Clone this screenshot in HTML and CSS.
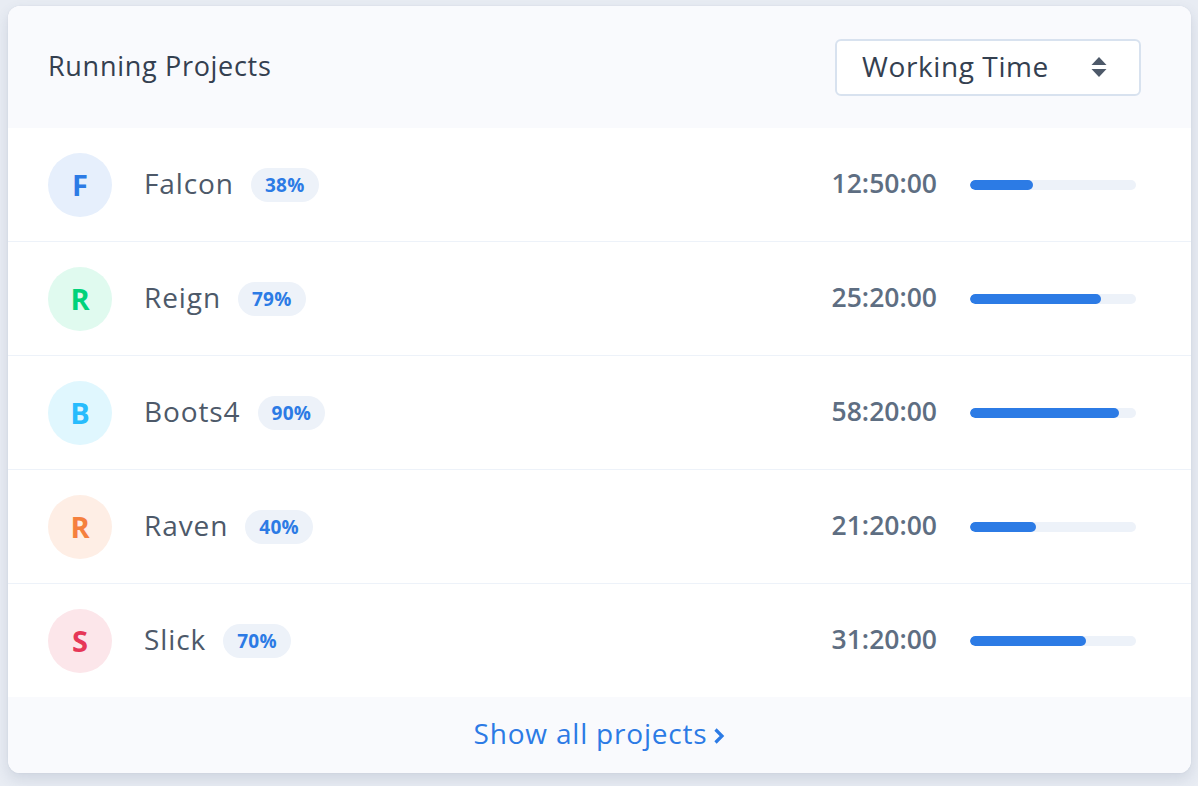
FILE: index.html
```html
<!DOCTYPE html>
<html lang="en">
<head>
<meta charset="utf-8">
<title>Running Projects</title>
<link rel="stylesheet" href="styles.css">
</head>
<body>
<div class="card">
  <div class="card-header">
    <h2 class="title">Running Projects</h2>
    <div class="select">
      <span class="select-label">Working Time</span>
      <svg class="select-arrows" width="16" height="22" viewBox="0 0 16 22"><path d="M8 1 L15.5 9 H0.5 Z" fill="#4d5969"/><path d="M8 21 L15.5 13 H0.5 Z" fill="#4d5969"/></svg>
    </div>
  </div>
  <div class="rows">
    <div class="row">
      <div class="avatar av-primary">F</div>
      <span class="name">Falcon</span>
      <span class="badge">38%</span>
      <span class="time">12:50:00</span>
      <div class="bar"><div class="fill" style="width:38%"></div></div>
    </div>
    <div class="row">
      <div class="avatar av-success">R</div>
      <span class="name">Reign</span>
      <span class="badge">79%</span>
      <span class="time">25:20:00</span>
      <div class="bar"><div class="fill" style="width:79%"></div></div>
    </div>
    <div class="row">
      <div class="avatar av-info">B</div>
      <span class="name">Boots4</span>
      <span class="badge">90%</span>
      <span class="time">58:20:00</span>
      <div class="bar"><div class="fill" style="width:90%"></div></div>
    </div>
    <div class="row">
      <div class="avatar av-warning">R</div>
      <span class="name">Raven</span>
      <span class="badge">40%</span>
      <span class="time">21:20:00</span>
      <div class="bar"><div class="fill" style="width:40%"></div></div>
    </div>
    <div class="row">
      <div class="avatar av-danger">S</div>
      <span class="name">Slick</span>
      <span class="badge">70%</span>
      <span class="time">31:20:00</span>
      <div class="bar"><div class="fill" style="width:70%"></div></div>
    </div>
  </div>
  <div class="card-footer">
    <a class="show-all" href="#">Show all projects<svg class="chev" width="12" height="18" viewBox="0 0 12 18"><path d="M2.5 2.5 L9 9 L2.5 15.5" fill="none" stroke="#2c7be5" stroke-width="3.2"/></svg></a>
  </div>
</div>
</body>
</html>
```

FILE: styles.css
```css
* { box-sizing: border-box; }
html, body { margin: 0; padding: 0; }
body {
  background: #e8ecf3;
  font-family: "Open Sans", "Noto Sans", sans-serif;
  width: 1198px;
  height: 786px;
  overflow: hidden;
  padding: 6px 7px 0 8px;
}
.card {
  width: 1183px;
  height: 767px;
  background: #fff;
  border-radius: 12px;
  overflow: hidden;
  display: flex;
  flex-direction: column;
  box-shadow: 0 6px 14px rgba(60, 80, 110, 0.14), 0 0 2px rgba(60, 80, 110, 0.08);
}
.card-header {
  height: 122px;
  flex: none;
  background: #f9fafd;
  display: flex;
  align-items: center;
  justify-content: space-between;
  padding: 0 50px 0 40px;
}
.title {
  margin: 0 0 3px;
  font-weight: 500;
  font-size: 27px;
  color: #344050;
  letter-spacing: 0.7px;
}
.select {
  width: 306px;
  height: 57px;
  background: #fff;
  border: 2px solid #d8e2ef;
  border-radius: 6px;
  display: flex;
  align-items: center;
  justify-content: space-between;
  padding: 0 32px 0 25px;
}
.select-label {
  font-size: 28px;
  color: #344050;
  letter-spacing: 0.6px;
  margin-bottom: 2px;
}
.rows { flex: none; }
.row {
  height: 114px;
  display: flex;
  align-items: center;
  padding: 0 55px 0 40px;
  border-bottom: 1px solid #edf2f9;
}
.row:last-child { border-bottom: none; height: 113px; }
.avatar {
  width: 64px;
  height: 64px;
  border-radius: 50%;
  display: flex;
  align-items: center;
  justify-content: center;
  font-weight: 700;
  font-size: 29px;
  flex: none;
  margin-right: 32px;
}
.av-primary { background: #e6effc; color: #2c7be5; }
.av-success { background: #e0faef; color: #00d27a; }
.av-info { background: #e0f7fe; color: #27bcfd; }
.av-warning { background: #feeee5; color: #f5803e; }
.av-danger { background: #fce6ea; color: #e63757; }
.name {
  font-size: 28px;
  color: #4d5969;
  letter-spacing: 0.9px;
  margin-right: 17px;
  margin-bottom: 4px;
}
.badge {
  height: 34px;
  padding: 0 14px;
  border-radius: 17px;
  background: #edf2f9;
  color: #2c7be5;
  font-weight: 700;
  font-size: 19px;
  letter-spacing: 0.3px;
  display: inline-flex;
  align-items: center;
}
.time {
  margin-left: auto;
  font-size: 26.5px;
  font-weight: 600;
  color: #5e6e82;
  margin-right: 33px;
  margin-bottom: 3px;
}
.bar {
  width: 166px;
  height: 10px;
  border-radius: 5px;
  background: #edf2f9;
  overflow: hidden;
  flex: none;
}
.fill {
  height: 100%;
  background: #2c7be5;
  border-radius: 5px;
}
.card-footer {
  flex: 1;
  background: #f9fafd;
  display: flex;
  align-items: center;
  justify-content: center;
}
.show-all {
  color: #2c7be5;
  text-decoration: none;
  font-size: 28px;
  letter-spacing: 0.8px;
  display: inline-flex;
  align-items: center;
  gap: 6px;
  padding-bottom: 4px;
}
.chev { margin-top: 5px; }
```
